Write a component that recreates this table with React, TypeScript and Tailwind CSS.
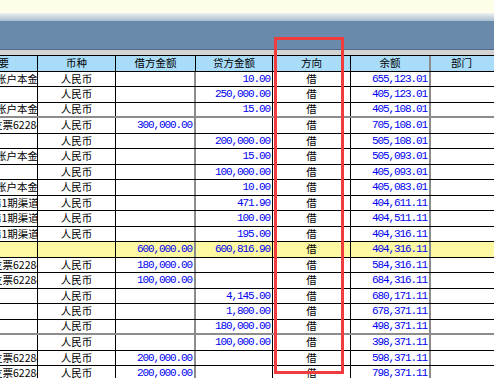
type Memo = "acc" | "accEnd" | "chk" | "chan" | "";

type Entry = {
  memo: Memo;
  cur: boolean;
  debit: string;
  credit: string;
  bal: string;
  grey?: boolean;
  yellow?: boolean;
};

const rows: Entry[] = [
  { memo: "acc", cur: true, debit: "", credit: "10.00", bal: "655,123.01" },
  { memo: "", cur: true, debit: "", credit: "250,000.00", bal: "405,123.01" },
  { memo: "acc", cur: true, debit: "", credit: "15.00", bal: "405,108.01", grey: true },
  { memo: "chk", cur: true, debit: "300,000.00", credit: "", bal: "705,108.01" },
  { memo: "", cur: true, debit: "", credit: "200,000.00", bal: "505,108.01" },
  { memo: "acc", cur: true, debit: "", credit: "15.00", bal: "505,093.01" },
  { memo: "", cur: true, debit: "", credit: "100,000.00", bal: "405,093.01" },
  { memo: "accEnd", cur: true, debit: "", credit: "10.00", bal: "405,083.01" },
  { memo: "chan", cur: true, debit: "", credit: "471.90", bal: "404,611.11" },
  { memo: "chan", cur: true, debit: "", credit: "100.00", bal: "404,511.11" },
  { memo: "chan", cur: true, debit: "", credit: "195.00", bal: "404,316.11" },
  { memo: "", cur: false, debit: "600,000.00", credit: "600,816.90", bal: "404,316.11", yellow: true },
  { memo: "chk", cur: true, debit: "180,000.00", credit: "", bal: "584,316.11" },
  { memo: "chk", cur: true, debit: "100,000.00", credit: "", bal: "684,316.11" },
  { memo: "", cur: true, debit: "", credit: "4,145.00", bal: "680,171.11" },
  { memo: "", cur: true, debit: "", credit: "1,800.00", bal: "678,371.11" },
  { memo: "", cur: true, debit: "", credit: "180,000.00", bal: "498,371.11", grey: true },
  { memo: "", cur: true, debit: "", credit: "100,000.00", bal: "398,371.11" },
  { memo: "chk", cur: true, debit: "200,000.00", credit: "", bal: "598,371.11" },
  { memo: "chk", cur: true, debit: "200,000.00", credit: "", bal: "798,371.11" },
];

const cjk = "font-['SimSun','Noto_Sans_CJK_SC',sans-serif] text-[10.5px] leading-none";
const num =
  "font-['Liberation_Mono',monospace] text-[11px] tracking-[-1.1px] leading-none text-[#0000f0]";

function MemoText({ memo }: { memo: Memo }) {
  if (memo === "acc") return <span className="-ml-[4px]">账户本金转出</span>;
  if (memo === "accEnd") return <span className="-ml-[4px]">账户本金</span>;
  if (memo === "chk") return <span className="-ml-[8px]">支票62284</span>;
  if (memo === "chan") return <span className="-ml-[9px]">第1期渠道费</span>;
  return null;
}

function Row({ r, i }: { r: Entry; i: number }) {
  const h = i % 2 === 0 ? "h-[15px]" : "h-[16px]";
  const line = r.grey ? "border-b-2 border-b-[#8c8c8c]" : "border-b border-b-black";
  const bg = r.yellow ? "bg-[#fcf9a2]" : "bg-white";

  return (
    <div className={`flex ${h} ${line} ${bg}`}>
      <div className={`w-[38px] shrink-0 border-r border-r-black overflow-hidden flex items-center whitespace-nowrap ${cjk}`}>
        <MemoText memo={r.memo} />
      </div>
      <div className={`w-[78px] shrink-0 border-r border-r-black flex items-center justify-center ${cjk}`}>
        {r.cur ? "人民币" : ""}
      </div>
      <div className={`w-[80px] shrink-0 border-r-2 border-r-[#8c8c8c] flex items-center justify-end pr-[2px] ${num}`}>
        {r.debit}
      </div>
      <div className={`w-[77px] shrink-0 border-r border-r-black flex items-center justify-end pr-[2px] ${num}`}>
        {r.credit}
      </div>
      <div className={`w-[78px] shrink-0 border-r border-r-black flex items-center justify-center ${cjk}`}>
        借
      </div>
      <div className={`w-[80px] shrink-0 border-r-2 border-r-[#8c8c8c] flex items-center justify-end pr-[2px] ${num}`}>
        {r.bal}
      </div>
      <div className="flex-1" />
    </div>
  );
}

export default function App() {
  return (
    <div className="relative w-[494px] h-[378px] overflow-hidden bg-white">
      {/* toolbar / title bands */}
      <div className="h-[13px] bg-[#fdfde8]" />
      <div className="h-[8px] bg-gradient-to-b from-[#eef2f0] to-[#a9bccf]" />
      <div className="h-[28px] bg-[#6a8aab]" />
      <div className="h-px bg-[#4f6c8a]" />
      <div className="h-[5px] bg-[#d3d3d3]" />

      {/* header */}
      <div className={`flex h-[17px] border-y border-y-black bg-[#a9dcf9] ${cjk} text-black`}>
        <div className="w-[38px] shrink-0 border-r border-r-black overflow-hidden flex items-center whitespace-nowrap">
          <span className="-ml-[12px]">摘要</span>
        </div>
        <div className="w-[78px] shrink-0 border-r border-r-black flex items-center justify-center">币种</div>
        <div className="w-[80px] shrink-0 border-r border-r-black flex items-center justify-center">借方金额</div>
        <div className="w-[77px] shrink-0 border-r border-r-black flex items-center justify-center">贷方金额</div>
        <div className="w-[78px] shrink-0 border-r border-r-black flex items-center justify-center">方向</div>
        <div className="w-[80px] shrink-0 border-r-2 border-r-[#8c8c8c] flex items-center justify-center">余额</div>
        <div className="flex-1 flex items-center justify-center pr-[2px]">部门</div>
      </div>

      {rows.map((r, i) => (
        <Row key={i} r={r} i={i} />
      ))}

      {/* highlight box */}
      <div className="absolute left-[274px] top-[37px] w-[70px] h-[337px] border-[3px] border-[#f03c3c]" />
    </div>
  );
}
